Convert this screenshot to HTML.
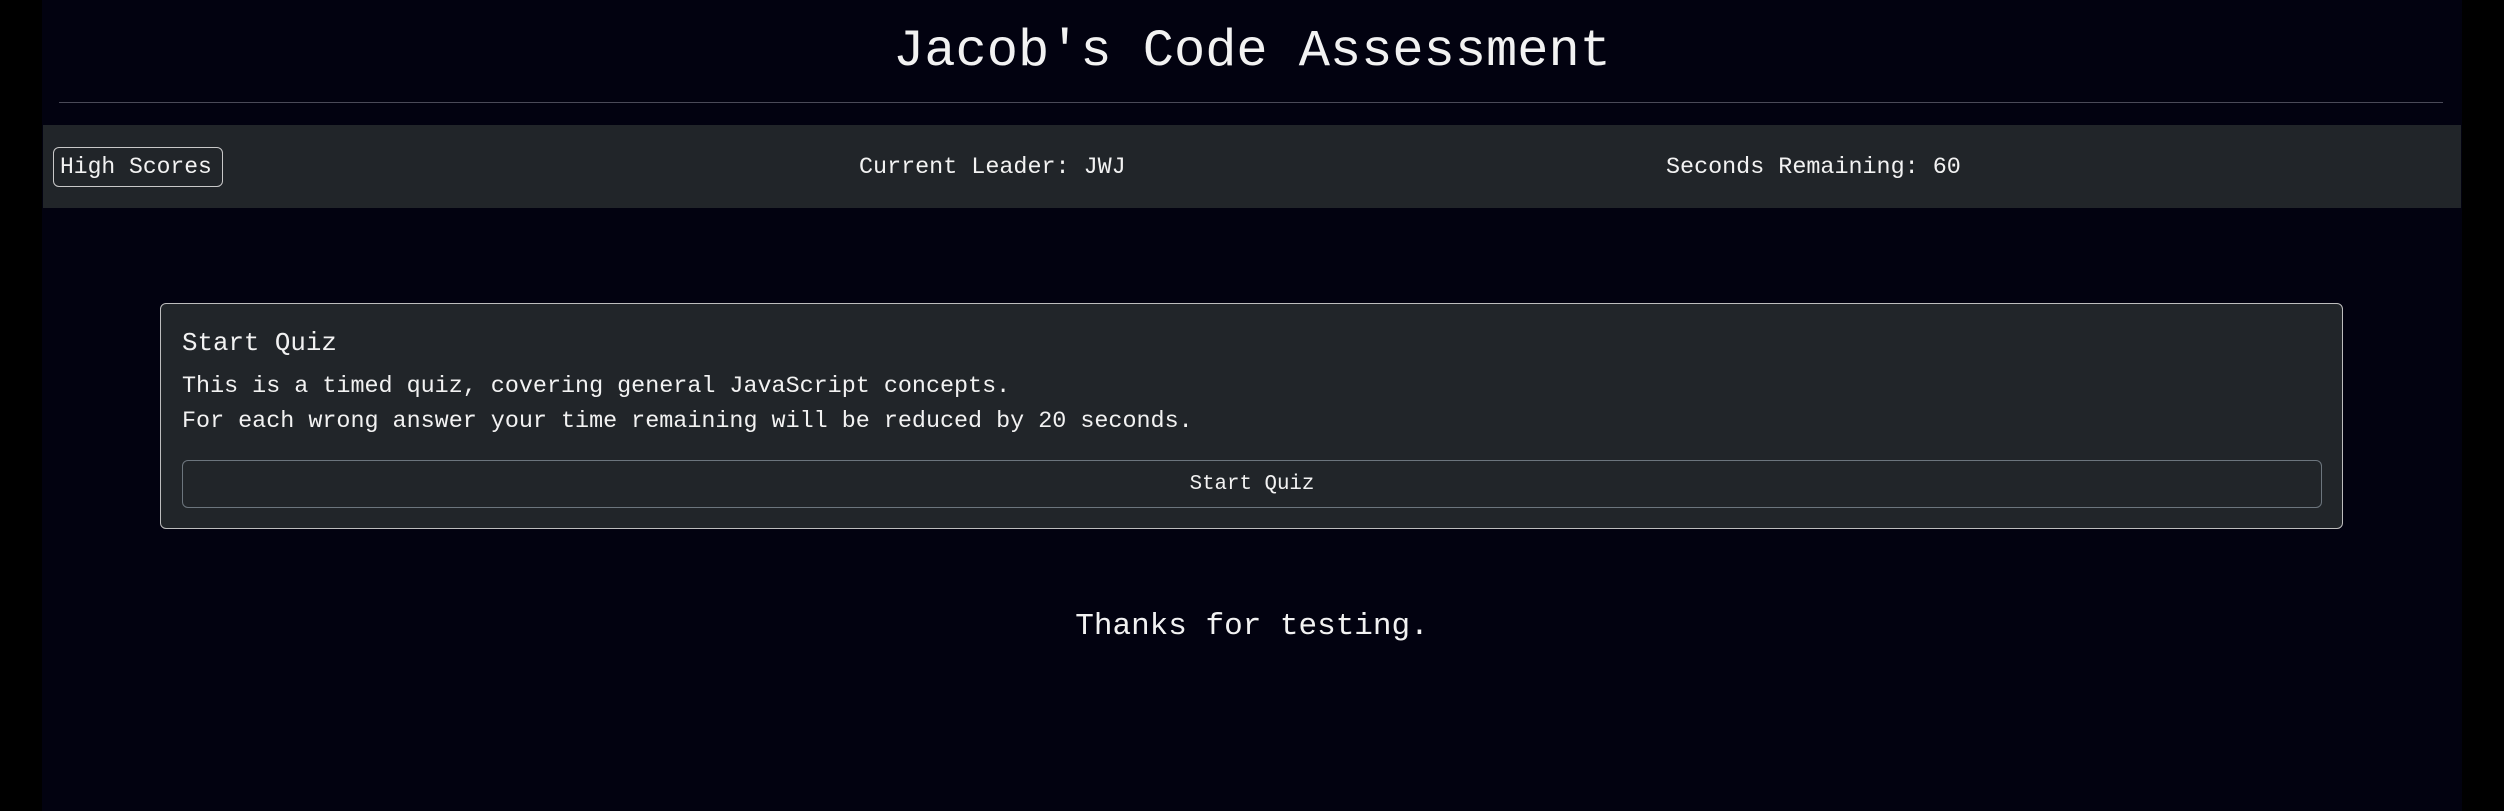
<!DOCTYPE html>
<html><head><meta charset="utf-8"><style>
html,body{margin:0;padding:0;background:#000;width:2504px;height:811px;overflow:hidden}
#b{position:absolute;left:42px;top:0;width:2420px;height:811px;background:#020210;font-family:"Liberation Mono",monospace;color:#f2f2f2}
.a{position:absolute;white-space:nowrap;line-height:1}
</style></head><body><div id="b">
<div class="a" style="left:0;width:2420px;text-align:center;top:26px;font-size:52px">Jacob's Code Assessment</div>
<div style="position:absolute;left:17px;width:2384px;top:102px;height:1px;background:#4a4a58"></div>
<div style="position:absolute;left:1px;width:2418px;top:125px;height:83px;background:#212529"></div>
<div style="position:absolute;left:11px;top:147px;width:170px;height:40px;border:1.5px solid #c8c8c8;border-radius:6px;box-sizing:border-box"></div>
<div class="a" style="left:18px;top:156px;font-size:23px">High Scores</div>
<div class="a" style="left:817px;top:157px;font-size:23.4px">Current Leader: JWJ</div>
<div class="a" style="left:1624px;top:157px;font-size:23.4px">Seconds Remaining: 60</div>
<div style="position:absolute;left:118px;top:303px;width:2183px;height:226px;background:#212529;border:1.5px solid #bdbdbd;border-radius:6px;box-sizing:border-box"></div>
<div class="a" style="left:140px;top:331px;font-size:25.8px">Start Quiz</div>
<div class="a" style="left:140px;top:376px;font-size:23.4px">This is a timed quiz, covering general JavaScript concepts.</div>
<div class="a" style="left:140px;top:411px;font-size:23.4px">For each wrong answer your time remaining will be reduced by 20 seconds.</div>
<div style="position:absolute;left:140px;top:460px;width:2140px;height:48px;border:1.5px solid #6c757d;border-radius:6px;box-sizing:border-box"></div>
<div class="a" style="left:140px;width:2140px;text-align:center;top:475px;font-size:20.8px">Start Quiz</div>
<div class="a" style="left:0;width:2420px;text-align:center;top:611px;font-size:31px">Thanks for testing.</div>
</div></body></html>
